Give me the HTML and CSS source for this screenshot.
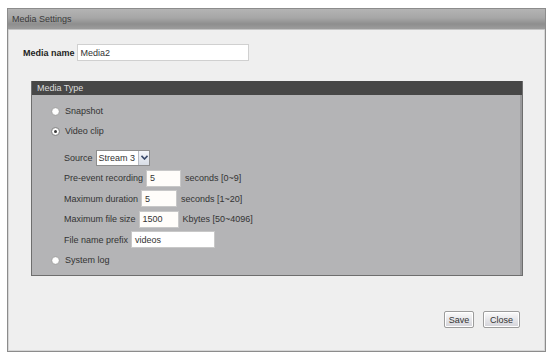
FILE: index.html
```html
<!DOCTYPE html>
<html>
<head>
<meta charset="utf-8">
<link rel="stylesheet" href="styles.css">
</head>
<body>
<div class="window">
  <div class="titlebar">Media Settings</div>
  <div class="content">
    <div class="name-row">
      <span class="name-label">Media name</span>
      <span class="field name-field">Media2</span>
    </div>
    <div class="typebox">
      <div class="typebox-head">Media Type</div>
      <div class="typebox-body">
        <div class="radio-row"><span class="radio"></span><span>Snapshot</span></div>
        <div class="radio-row"><span class="radio checked"></span><span>Video clip</span></div>
        <div class="sub">
          <div class="sub-row">
            <span>Source</span>
            <span class="select"><span class="select-text">Stream 3</span><span class="select-arrow"><svg width="7" height="5" viewBox="0 0 7 5"><path d="M0.5 0.8 L3.5 4 L6.5 0.8" fill="none" stroke="#3a4a6a" stroke-width="1.6"/></svg></span></span>
          </div>
          <div class="sub-row">
            <span>Pre-event recording</span>
            <span class="field w35">5</span>
            <span class="unit">seconds [0~9]</span>
          </div>
          <div class="sub-row">
            <span>Maximum duration</span>
            <span class="field w36">5</span>
            <span class="unit">seconds [1~20]</span>
          </div>
          <div class="sub-row">
            <span>Maximum file size</span>
            <span class="field w40">1500</span>
            <span class="unit">Kbytes [50~4096]</span>
          </div>
          <div class="sub-row">
            <span>File name prefix</span>
            <span class="field w84">videos</span>
          </div>
        </div>
        <div class="radio-row"><span class="radio"></span><span>System log</span></div>
      </div>
    </div>
    <div class="buttons">
      <button class="btn save">Save</button>
      <button class="btn close">Close</button>
    </div>
  </div>
</div>
</body>
</html>
```

FILE: styles.css
```css
* { box-sizing: border-box; }
html, body { margin: 0; padding: 0; background: #ffffff; }
body {
  font-family: "Liberation Sans", Arial, sans-serif;
  font-size: 9px;
  color: #2a2a2a;
  padding: 8px 3px 4px 7px;
}
.window {
  width: 539px;
  height: 344px;
  border: 1px solid #8c8c8c;
  box-shadow: inset 0 0 0 1px #d6d6d6;
  background: #efefef;
  display: flex;
  flex-direction: column;
}
.titlebar {
  height: 21px;
  padding: 5px 0 0 4px;
  color: #3a3a3a;
  background: linear-gradient(#b4b4b4 0%, #a6a6a6 45%, #8e8e8e 75%, #9c9c9c 100%);
  border-bottom: 1px solid #c4c4c4;
}
.content {
  flex: 1;
  display: flex;
  flex-direction: column;
  padding: 14px 25px 23px 15px;
}
.name-row {
  display: flex;
  align-items: center;
  height: 17px;
}
.name-label {
  font-weight: bold;
  color: #1e1e1e;
  margin-right: 2px;
}
.field {
  display: inline-flex;
  align-items: center;
  height: 17px;
  background: #fffdfa;
  border: 1px solid #c8c8c8;
  padding-left: 3px;
  color: #333;
}
.name-field { width: 172px; border-color: #d0d0d0; background: #fff; }
.typebox {
  margin: 20px 0 0 8px;
  width: 492px;
  border: 1px solid #6e6e6e;
  border-top: none;
  display: flex;
  flex-direction: column;
}
.typebox-head {
  height: 14px;
  background: #474747;
  color: #dcdcdc;
  padding: 2px 0 0 5px;
}
.typebox-body {
  background: #b4b4b6;
  padding: 6px 0 5px 19px;
  border-right: 2px solid #9a9a9c;
}
.radio-row {
  display: flex;
  align-items: center;
  height: 20px;
  color: #333;
}
.radio {
  width: 9px;
  height: 9px;
  border-radius: 50%;
  border: 1px solid #a8a8a8;
  background: radial-gradient(circle at 50% 50%, #ffffff 0 45%, #dedede 80%);
  margin-right: 5px;
  position: relative;
}
.radio.checked {
  border-color: #8a8a8a;
}
.radio.checked::after {
  content: "";
  position: absolute;
  left: 2px;
  top: 2px;
  width: 3px;
  height: 3px;
  border-radius: 50%;
  background: #3a3a3a;
}
.sub {
  margin-top: 6.5px;
  padding-left: 13px;
  display: flex;
  flex-direction: column;
}
.sub-row {
  display: flex;
  align-items: center;
  height: 20.5px;
  color: #333;
}
.sub-row > span:first-child { margin-right: 3px; }
.select {
  display: inline-flex;
  align-items: center;
  height: 16px;
  border: 1px solid #8e8e8e;
  background: #fff;
}
.select-text { padding: 0 3px 0 2px; }
.select-arrow {
  display: inline-flex;
  align-items: center;
  justify-content: center;
  width: 11px;
  height: 14px;
  background: linear-gradient(#f4f6fa, #d8dde6);
  border-left: 1px solid #b8bcc4;
}
.w35 { width: 35px; }
.w36 { width: 36px; }
.w40 { width: 40px; }
.w84 { width: 84px; background: #fff; }
.unit { margin-left: 4px; }
.buttons {
  margin-top: auto;
  display: flex;
  justify-content: flex-end;
  gap: 9px;
}
.btn {
  font-family: "Liberation Sans", Arial, sans-serif;
  font-size: 9px;
  color: #333;
  height: 17px;
  padding: 0;
  border: 1px solid #9c9c9c;
  border-radius: 2px;
  background: linear-gradient(#fbfbfb, #e2e2e6 60%, #d4d4da);
  box-shadow: inset 0 0 0 1px #ffffff;
}
.save { width: 30px; }
.close { width: 37px; }
```
